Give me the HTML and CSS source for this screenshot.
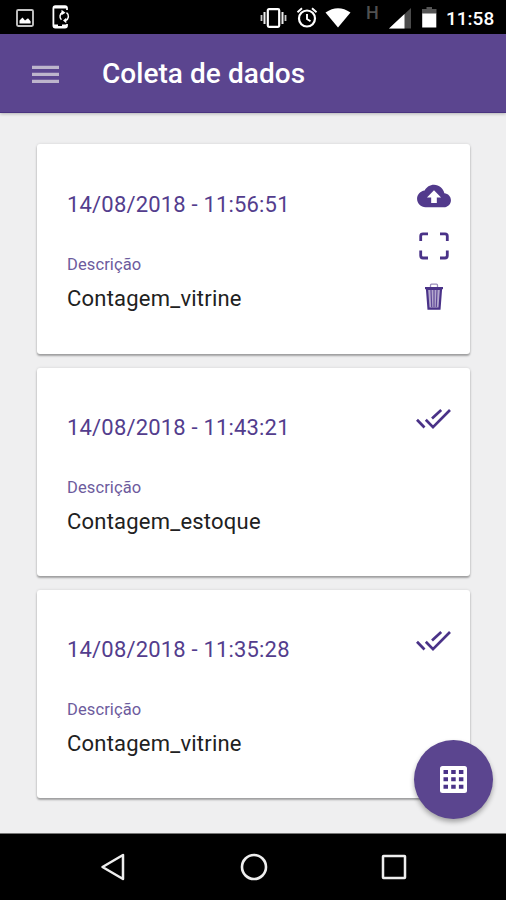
FILE: index.html
```html
<!DOCTYPE html>
<html lang="pt-BR">
<head>
<meta charset="utf-8">
<title>Coleta de dados</title>
<link rel="stylesheet" href="styles.css">
</head>
<body>
<svg class="defs" width="0" height="0" aria-hidden="true">
  <symbol id="double-check" viewBox="0 0 36 22">
    <path d="M2 11.7l7.5 7.8M10.8 11.7l7.2 7.4L35 2M17 10.6L26.2 2" fill="none" stroke="#4a3288" stroke-width="2.7"/>
  </symbol>
</svg>
<div class="screen">
  <header class="status">
    <svg class="picture" width="18" height="18" viewBox="0 0 18 18"><rect x="1" y="1" width="16" height="16" rx="1.2" fill="none" stroke="#c4c4c4" stroke-width="1.9"/><path d="M3.5 14.5v-3l3-3 2.5 3 3-2.2 2.6 3v2.2z" fill="#fff"/></svg>
    <svg class="phone" width="19" height="24" viewBox="0 0 19 24"><path d="M15 5V3.200Q15 1.200 13 1.200H3.400Q1.400 1.200 1.400 3.200V20.500Q1.400 22.500 3.400 22.500H13Q15 22.500 15 20.500V19" fill="none" stroke="#fff" stroke-width="1.800"/><path d="M2 1.500H14V3.500H2zM2 19.500h4v1.500h4v-1.500h4.500v3H2z" fill="#fff"/><path d="M9.400 14.800A4.500 4.500 0 0 1 10.500 7.500M14.500 7.600A4.500 4.500 0 0 1 13.500 15.500" fill="none" stroke="#fff" stroke-width="1.500"/><path d="M9.500 4.800l4 2.900-4 2.500zM14.300 12.800v5.400l-3.300-2.700z" fill="#fff"/></svg>
    <span class="fill"></span>
    <svg class="vibrate" width="27" height="20" viewBox="0 0 27 20"><rect x="7.800" y="1.200" width="11.400" height="17.600" rx="1.200" fill="none" stroke="#fff" stroke-width="2.200"/><path d="M4.500 4v12M22.500 4v12" stroke="#eee" stroke-width="2"/><path d="M1.500 7v6M25.500 7v6" stroke="#ccc" stroke-width="1.800"/></svg>
    <svg class="alarm" width="22" height="21" viewBox="0 0 22 21"><circle cx="11" cy="11.500" r="8" fill="none" stroke="#fff" stroke-width="2.200"/><path d="M1.500 5.200l4.500-4M20.500 5.200l-4.500-4M11 7v5l3.500 2.200" fill="none" stroke="#fff" stroke-width="1.900"/></svg>
    <svg class="wifi" width="26" height="20" viewBox="0 0 26 20"><path d="M.5 4.500Q13-4 25.500 4.500L13 19.500z" fill="#fff"/></svg>
    <span class="net">H</span>
    <svg class="signal" width="23" height="21" viewBox="0 0 23 21"><path d="M0 20.500L22 0V20.500z" fill="#4b4b4b"/><path d="M0 20.500L15.500 6V20.500z" fill="#fff"/></svg>
    <svg class="battery" width="15" height="21" viewBox="0 0 15 21"><path d="M0 2h4.500V0h5.500v2H14.500v5H0z" fill="#555"/><path d="M.2 6.500h14.100v14H.2z" fill="#fff"/></svg>
    <time>11:58</time>
  </header>
  <nav class="appbar">
    <svg width="27" height="19" viewBox="0 0 27 19"><path d="M0 2.300h27M0 9.300h27M0 16.300h27" stroke="#bdb5cc" stroke-width="3.200"/></svg>
    <h1>Coleta de dados</h1>
  </nav>
  <main>
    <article class="card first">
      <div class="info">
        <h2>14/08/2018 - 11:56:51</h2>
        <p class="label">Descrição</p>
        <p class="value">Contagem_vitrine</p>
      </div>
      <div class="actions">
        <svg class="cloud" width="34" height="24" viewBox="0 3.500 24 17"><path fill="#523a8c" d="M19.350 10.040C18.670 6.590 15.640 4 12 4 9.110 4 6.600 5.640 5.350 8.040 2.340 8.360 0 10.910 0 14c0 3.310 2.690 6 6 6h13c2.760 0 5-2.240 5-5 0-2.640-2.050-4.780-4.650-4.960zM14 13v4h-4v-4H7l5-5 5 5h-3z"/></svg>
        <svg class="scan" width="30" height="28" viewBox="0 0 30 28"><path d="M1.700 9V4Q1.700 1.800 4 1.800H9M21 1.800h5Q28.300 1.800 28.300 4V9M28.300 18.500v5Q28.300 26 26 26H21M9 26H4Q1.700 26 1.700 23.500v-5" fill="none" stroke="#4a3288" stroke-width="2.800"/></svg>
        <svg class="trash" width="18" height="28" viewBox="0 0 18 28"><path d="M5.500 4V2.200Q5.500 1.200 6.500 1.200h5Q12.500 1.200 12.500 2.200V4" fill="none" stroke="#9a8cba" stroke-width="1.300"/><path d="M0 4h18v2.200H0z" fill="#4a3288"/><path d="M2 6l1.500 19.600h11L16 6z" fill="#b5a9ce" stroke="#4a3288" stroke-width="2.200"/><path d="M6 7l.7 17M9 7v17M12 7l-.7 17" stroke="#5f4998" stroke-width="1.200"/></svg>
      </div>
    </article>
    <article class="card">
      <div class="info">
        <h2>14/08/2018 - 11:43:21</h2>
        <p class="label">Descrição</p>
        <p class="value">Contagem_estoque</p>
      </div>
      <div class="actions"><svg class="check" width="36" height="22"><use href="#double-check"/></svg></div>
    </article>
    <article class="card">
      <div class="info">
        <h2>14/08/2018 - 11:35:28</h2>
        <p class="label">Descrição</p>
        <p class="value">Contagem_vitrine</p>
      </div>
      <div class="actions"><svg class="check" width="36" height="22"><use href="#double-check"/></svg></div>
    </article>
  </main>
  <footer class="navbar">
    <svg width="26" height="28" viewBox="0 0 26 28"><path d="M2.500 14L23 2v24z" fill="none" stroke="#eee" stroke-width="2.500" stroke-linejoin="round"/></svg>
    <svg width="28" height="28" viewBox="0 0 28 28"><circle cx="14" cy="14" r="12" fill="none" stroke="#eee" stroke-width="2.600"/></svg>
    <svg width="26" height="28" viewBox="0 0 26 28"><rect x="2" y="3" width="22" height="22" rx=".5" fill="none" stroke="#eee" stroke-width="2.500"/></svg>
  </footer>
  <button class="fab" aria-label="Teclado">
    <svg width="27" height="27" viewBox="0 0 27 27"><rect width="27" height="27" rx="2.500" fill="#fff"/><path d="M3.500 4h4.500v4H3.500zM11.200 4h4.500v4h-4.500zM18.900 4h4.500v4h-4.500zM3.500 11.300h4.500v4H3.500zM11.200 11.300h4.500v4h-4.500zM18.900 11.300h4.500v4h-4.500zM3.500 18.700h4.500v4H3.500zM11.200 18.700h4.500v4h-4.500zM18.900 18.700h4.500v4h-4.500z" fill="#4a3288"/></svg>
  </button>
</div>
</body>
</html>
```
FILE: styles.css
```css
* { box-sizing: border-box; }
body, h1, h2, p { margin: 0; }
body { font-family: Roboto, sans-serif; background: #efeff0; }
svg { display: block; flex: none; }
.defs { position: absolute; }

.screen {
  position: relative;
  display: flex;
  flex-direction: column;
  width: 506px;
  height: 900px;
  overflow: hidden;
}

.status {
  display: flex;
  flex: none;
  align-items: flex-start;
  height: 34px;
  padding: 0 11px 0 16px;
  background: #000;
  color: #fff;
}
.fill { flex: 1; }
.picture { margin-top: 8.5px; }
.phone { margin: 5px 0 0 18px; }
.vibrate { margin: 7.5px 9px 0 0; }
.alarm { margin: 7px 7px 0 0; }
.wifi { margin: 7.5px 15px 0 0; }
.net { width: 13px; margin: 2px 10px 0 0; font-size: 18px; line-height: 21px; font-weight: 500; color: #505050; }
.signal { margin: 8px 10px 0 0; }
.battery { margin: 7px 9px 0 0; }
.status time { width: 49px; font-size: 19px; line-height: 37px; font-weight: 500; white-space: nowrap; }

.appbar {
  position: relative;
  display: flex;
  flex: none;
  align-items: center;
  gap: 43px;
  height: 79px;
  padding: 2px 32px 0;
  background: #5b458f;
  border-bottom: 1px solid #493380;
  box-shadow: 0 1px 3px rgba(0, 0, 0, .25);
}
h1 { font-size: 28px; line-height: 34px; font-weight: 500; letter-spacing: .05px; color: #fff; white-space: nowrap; }

main {
  display: flex;
  flex: 1;
  flex-direction: column;
  gap: 14px;
  padding: 31px 36px 0 37px;
}
.card {
  display: flex;
  justify-content: space-between;
  height: 208px;
  padding: 0 19px 0 30px;
  background: #fff;
  border-radius: 3px;
  box-shadow: 0 2px 2px rgba(0, 0, 0, .3), 0 0 3px rgba(0, 0, 0, .12);
}
.card.first { height: 210px; }
.info { padding-top: 46px; white-space: nowrap; }
.first .info { padding-top: 47px; }
h2 { font-size: 22px; line-height: 28px; font-weight: 400; letter-spacing: .18px; color: #533d8d; }
.label { margin-top: 35.5px; font-size: 16.5px; line-height: 20px; letter-spacing: .1px; color: #6d5b9d; }
.value { margin-top: 10.5px; font-size: 22px; line-height: 28px; letter-spacing: .22px; color: #212121; }
.actions { display: flex; flex-direction: column; align-items: center; padding-top: 40px; }
.scan { margin-top: 24px; }
.trash { margin-top: 23px; }

.navbar {
  display: flex;
  flex: none;
  align-items: center;
  justify-content: space-between;
  height: 67px;
  padding: 0 99px 1px 100px;
  background: #000;
  border-top: 1px solid #777;
}

.fab {
  position: absolute;
  right: 13px;
  bottom: 81px;
  display: flex;
  align-items: center;
  justify-content: center;
  width: 79px;
  height: 79px;
  padding: 0;
  border: 0;
  border-radius: 50%;
  background: #5b458f;
  box-shadow: 0 3px 5px rgba(0, 0, 0, .32);
}
```
